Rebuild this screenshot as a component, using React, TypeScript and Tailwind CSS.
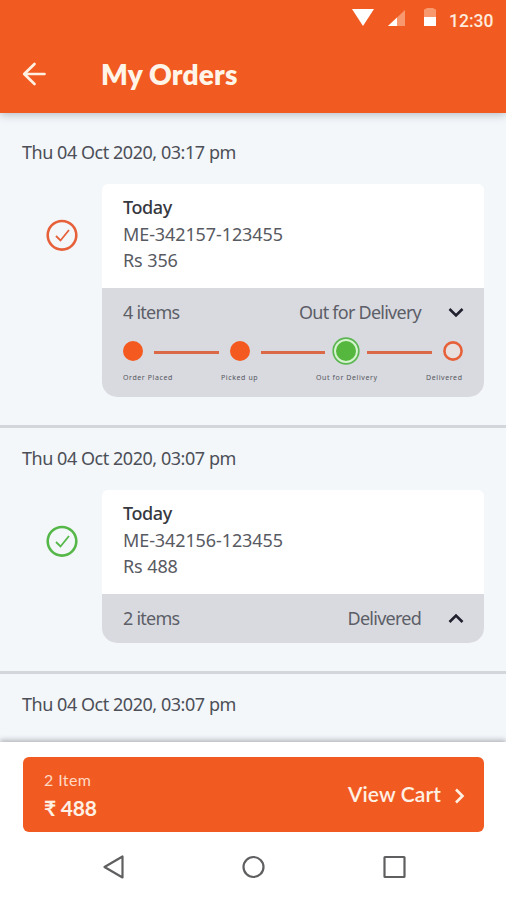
import React from 'react';

const steps = ['Order Placed', 'Picked up', 'Out for Delivery', 'Delivered'];

function StatusBar() {
  return (
    <div className="flex h-[37px] items-start justify-end pr-3">
      <svg width="91" height="32" viewBox="0 0 91 32" className="shrink-0">
        <path d="M1 9H23L12 26Z" fill="#fff" />
        <path d="M37 26L54 10V26Z" fill="#f8986f" />
        <path d="M37 26L46 17.500V26Z" fill="#fff" />
        <path d="M73 17V10Q73 9 74.500 9L76 8H82L83.500 9Q85 9 85 10V17Z" fill="#f8986f" />
        <path d="M73 17H85V26H73Z" fill="#fff" />
      </svg>
      <span className="mt-[9px] ml-[7px] w-[45px] text-[17.500px] leading-[24px] font-medium whitespace-nowrap text-[#ffeadb] [font-family:Roboto,sans-serif]">
        12:30
      </span>
    </div>
  );
}

function Header() {
  return (
    <header className="relative z-10 h-[113px] shrink-0 bg-[#f15b22] shadow-[0_2px_8px_rgba(80,90,110,0.35)]">
      <StatusBar />
      <div className="flex h-[74px] items-center pl-[22px]">
        <svg width="25" height="26" viewBox="0 0 25 26" fill="none" stroke="#fff0e2" strokeWidth="2.700" strokeLinecap="round" strokeLinejoin="round">
          <path d="M12.500 3L2.200 13L12.500 23M2.500 13H22.500" />
        </svg>
        <h1 className="ml-[54px] text-[28px] leading-8 font-extrabold tracking-[0.2px] text-[#fff4e8] [font-family:Lato,sans-serif]">My Orders</h1>
      </div>
    </header>
  );
}

function CheckBadge({ color }: { color: string }) {
  return (
    <svg width="32" height="32" viewBox="0 0 32 32" fill="none" stroke={color} className="mt-[35px] ml-[46px] shrink-0">
      <circle cx="16" cy="16.300" r="14.300" strokeWidth="2.600" />
      <path d="M10 17L14.500 21.500L23 11" strokeWidth="1.800" />
    </svg>
  );
}

function Marker({ index }: { index: number }) {
  if (index === 2) {
    return (
      <svg width="28" height="28" viewBox="0 0 28 28">
        <circle cx="14" cy="14" r="12.800" fill="#d6f3d0" stroke="#5cb651" strokeWidth="1.700" />
        <circle cx="14" cy="14" r="10" fill="#55b73d" />
      </svg>
    );
  }
  return (
    <svg width="20" height="20" viewBox="0 0 20 20">
      {index === 3 ? (
        <circle cx="10" cy="10" r="8.600" fill="#e8dfdf" stroke="#e6613a" strokeWidth="2.600" />
      ) : (
        <circle cx="10" cy="10" r="10" fill="#f4591f" />
      )}
    </svg>
  );
}

function Progress() {
  return (
    <div>
      <div className="flex h-7 items-center pr-[21px] pl-[21px]">
        <Marker index={0} />
        <i className="mt-[2px] mr-[11px] ml-[11px] h-[3px] flex-1 bg-[#db6847]" />
        <Marker index={1} />
        <i className="mt-[2px] mr-[7px] ml-[11px] h-[3px] flex-1 bg-[#db6847]" />
        <Marker index={2} />
        <i className="mt-[2px] mr-[11px] ml-[7px] h-[3px] flex-1 bg-[#db6847]" />
        <Marker index={3} />
      </div>
      <div className="mt-[8px] flex px-[21px] text-[7px] leading-[10px] tracking-[0.6px] whitespace-nowrap text-[#555660]">
        <span className="w-[98px]">{steps[0]}</span>
        <span className="w-[95px]">{steps[1]}</span>
        <span className="w-[110px]">{steps[2]}</span>
        <span>{steps[3]}</span>
      </div>
    </div>
  );
}

function DateLine({ text }: { text: string }) {
  return <div className="pl-[22px] text-[18px] leading-6 tracking-[-0.46px] text-[#4c4f57]">{text}</div>;
}

interface OrderProps {
  date: string;
  id: string;
  price: string;
  items: string;
  status: string;
  color: string;
  open?: boolean;
}

function Order({ date, id, price, items, status, color, open }: OrderProps) {
  return (
    <section className="border-b-[3px] border-[#d3d6da] pt-[18px] pb-[28px]">
      <DateLine text={date} />
      <div className="mt-[20px] flex items-start">
        <CheckBadge color={color} />
        <article className="ml-6 w-[382px] overflow-hidden rounded-t-[6px] rounded-b-[15px] bg-white">
          <div className="h-[104px] pt-[10px] pl-[21px] text-[18px] leading-[26.500px] tracking-[-0.1px] text-[#585a62]">
            <div className="font-medium tracking-[-0.4px] text-[#363840]">Today</div>
            <div>{id}</div>
            <div>{price}</div>
          </div>
          <div className={open ? 'h-[109px] bg-[#d9dadf]' : 'h-[49px] bg-[#d9dadf]'}>
            <div className="flex h-[49px] items-center pr-[20px] pl-[21px] text-[18px] tracking-[-0.75px] text-[#5c5e68]">
              <span>{items}</span>
              <span className="mr-[27px] ml-auto">{status}</span>
              <svg width="16" height="12" viewBox="0 0 16 12" fill="none" stroke="#20212f" strokeWidth="2.600">
                <path d={open ? 'M1.500 2L8 8.500L14.500 2' : 'M1.500 9L8 2.500L14.500 9'} />
              </svg>
            </div>
            {open && <Progress />}
          </div>
        </article>
      </div>
    </section>
  );
}

function CartBar() {
  return (
    <div className="relative z-10 h-[93px] shrink-0 bg-white px-[23px] pt-[15px] pr-[22px] shadow-[0_-2px_5px_rgba(80,80,90,0.4)] [font-family:Lato,'Noto_Sans',sans-serif]">
      <div className="flex h-[75px] items-center rounded-[6px] bg-[#f15b22] pr-[19px] pl-[21px] text-[#fff0e4]">
        <div className="pt-[3px]">
          <div className="text-[16px] leading-5 tracking-[0.4px] text-[#ffd9c4]">2 Item</div>
          <div className="mt-[4px] text-[21px] leading-7 font-bold tracking-[-0.2px]">₹ 488</div>
        </div>
        <span className="mr-[13px] mb-[2px] ml-auto text-[21px] leading-7 font-semibold tracking-[0.1px]">View Cart</span>
        <svg width="11" height="16" viewBox="0 0 11 16" fill="none" stroke="#fff0e4" strokeWidth="2.600" className="mt-[3px]">
          <path d="M2 1.500L8.500 8L2 14.500" />
        </svg>
      </div>
    </div>
  );
}

function NavBar() {
  return (
    <nav className="relative z-10 h-[65px] shrink-0 bg-white">
      <svg width="506" height="65" viewBox="0 0 506 65" fill="none" stroke="#5f5f61" strokeWidth="2.200" strokeLinejoin="round">
        <path d="M122.500 21.500V42.500L104.500 32Z" />
        <circle cx="253.500" cy="32" r="10" />
        <rect x="384.500" y="22" width="20" height="20" rx="0.500" />
      </svg>
    </nav>
  );
}

export default function App() {
  return (
    <div className="flex h-[900px] w-[506px] flex-col overflow-hidden bg-[#f3f7fa] [font-family:'Noto_Sans',sans-serif]">
      <Header />
      <main className="min-h-0 flex-1 overflow-hidden pt-[9px]">
        <Order date="Thu 04 Oct 2020, 03:17 pm" id="ME-342157-123455" price="Rs 356" items="4 items" status="Out for Delivery" color="#e6613a" open />
        <Order date="Thu 04 Oct 2020, 03:07 pm" id="ME-342156-123455" price="Rs 488" items="2 items" status="Delivered" color="#55b748" />
        <div className="pt-[18px]">
          <DateLine text="Thu 04 Oct 2020, 03:07 pm" />
        </div>
      </main>
      <CartBar />
      <NavBar />
    </div>
  );
}
